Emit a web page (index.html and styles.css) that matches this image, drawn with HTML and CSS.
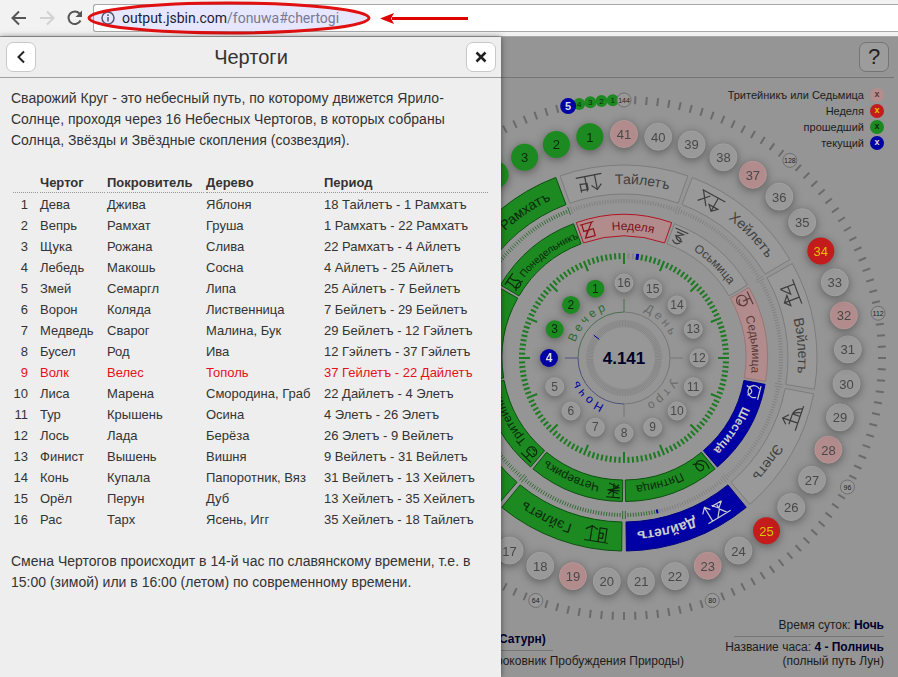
FILE: index.html
```html
<!DOCTYPE html>
<html lang="ru">
<head>
<meta charset="utf-8">
<title>Чертоги</title>
<link rel="stylesheet" href="styles.css">
</head>
<body>
<header class="browser">
  <button class="nav" aria-label="Back"><svg width="16" height="16" viewBox="0 0 16 16"><path d="M15 8H2M8 1.500L1.500 8L8 14.500"/></svg></button>
  <button class="nav nav-off" aria-label="Forward"><svg width="16" height="16" viewBox="0 0 16 16"><path d="M1 8H14M8 1.500L14.500 8L8 14.500"/></svg></button>
  <button class="nav" aria-label="Reload"><svg width="16" height="16" viewBox="0 0 16 16"><path d="M13.500 10.500A6.300 6.300 0 1 1 12.500 3.500"/><path class="solid" d="M15 0.500V7H8.500Z"/></svg></button>
  <div class="address">
    <svg class="info" width="14" height="14" viewBox="0 0 14 14"><circle cx="7" cy="7" r="6"/><path d="M7 6V10.500M7 3.300V4.900"/></svg>
    <span class="url"><b>output.jsbin.com</b>/fonuwa#chertogi</span>
  </div>
  <svg class="marker" width="480" height="36" viewBox="0 0 480 36">
    <ellipse cx="229" cy="18" rx="140" ry="15"/>
    <path class="shaft" d="M392 18.500H468"/>
    <path class="head" d="M380 18.500L394 13L391 18.500L394 24Z"/>
  </svg>
</header>
<div class="app">
  <main class="stage">
    <div class="topbar"><button class="square help">?</button></div>
    <svg class="dial" id="dial" viewBox="-144 -280 411 599"></svg>
    <ul class="legend">
      <li>Тритейникъ или Седьмица <i class="dot pink">x</i></li>
      <li>Неделя <i class="dot red">x</i></li>
      <li>прошедший <i class="dot green">x</i></li>
      <li>текущий <i class="dot blue">x</i></li>
    </ul>
    <footer class="facts">
      <div class="fact-left">
        <p class="fact-name"><b>Сатурн)</b></p>
        <p>роковник Пробуждения Природы)</p>
      </div>
      <div class="fact-right">
        <p class="fact-time">Время суток: <b>Ночь</b></p>
        <p>Название часа: <b>4 - Полничь</b></p>
        <p>(полный путь Лун)</p>
      </div>
    </footer>
  </main>
  <section class="panel">
    <header class="panel-head">
      <button class="square" aria-label="Назад"><svg width="14" height="14" viewBox="0 0 14 14"><path d="M10 1.500L4.500 7L10 12.500"/></svg></button>
      <h1>Чертоги</h1>
      <button class="square" aria-label="Закрыть"><svg class="cross" width="14" height="14" viewBox="0 0 14 14"><path d="M2.500 2.500L11.500 11.500M11.500 2.500L2.500 11.500"/></svg></button>
    </header>
    <div class="panel-body">
      <p>Сварожий Круг - это небесный путь, по которому движется Ярило-Солнце, проходя через 16 Небесных Чертогов, в которых собраны Солнца, Звёзды и Звёздные скопления (созвездия).</p>
      <table>
        <colgroup><col class="c-num"><col class="c-name"><col class="c-patron"><col class="c-tree"><col></colgroup>
        <thead><tr><th></th><th>Чертог</th><th>Покровитель</th><th>Дерево</th><th>Период</th></tr></thead>
        <tbody>
          <tr><td>1</td><td>Дева</td><td>Джива</td><td>Яблоня</td><td>18 Тайлетъ - 1 Рамхатъ</td></tr>
          <tr><td>2</td><td>Вепрь</td><td>Рамхат</td><td>Груша</td><td>1 Рамхатъ - 22 Рамхатъ</td></tr>
          <tr><td>3</td><td>Щука</td><td>Рожана</td><td>Слива</td><td>22 Рамхатъ - 4 Айлетъ</td></tr>
          <tr><td>4</td><td>Лебедь</td><td>Макошь</td><td>Сосна</td><td>4 Айлетъ - 25 Айлетъ</td></tr>
          <tr><td>5</td><td>Змей</td><td>Семаргл</td><td>Липа</td><td>25 Айлетъ - 7 Бейлетъ</td></tr>
          <tr><td>6</td><td>Ворон</td><td>Коляда</td><td>Лиственница</td><td>7 Бейлетъ - 29 Бейлетъ</td></tr>
          <tr><td>7</td><td>Медведь</td><td>Сварог</td><td>Малина, Бук</td><td>29 Бейлетъ - 12 Гэйлетъ</td></tr>
          <tr><td>8</td><td>Бусел</td><td>Род</td><td>Ива</td><td>12 Гэйлетъ - 37 Гэйлетъ</td></tr>
          <tr class="current"><td>9</td><td>Волк</td><td>Велес</td><td>Тополь</td><td>37 Гейлетъ - 22 Дайлетъ</td></tr>
          <tr><td>10</td><td>Лиса</td><td>Марена</td><td>Смородина, Граб</td><td>22 Дайлетъ - 4 Элетъ</td></tr>
          <tr><td>11</td><td>Тур</td><td>Крышень</td><td>Осина</td><td>4 Элетъ - 26 Элетъ</td></tr>
          <tr><td>12</td><td>Лось</td><td>Лада</td><td>Берёза</td><td>26 Элетъ - 9 Вейлетъ</td></tr>
          <tr><td>13</td><td>Финист</td><td>Вышень</td><td>Вишня</td><td>9 Вейлетъ - 31 Вейлетъ</td></tr>
          <tr><td>14</td><td>Конь</td><td>Купала</td><td>Папоротник, Вяз</td><td>31 Вейлетъ - 13 Хейлетъ</td></tr>
          <tr><td>15</td><td>Орёл</td><td>Перун</td><td>Дуб</td><td>13 Хейлетъ - 35 Хейлетъ</td></tr>
          <tr><td>16</td><td>Рас</td><td>Тарх</td><td>Ясень, Игг</td><td>35 Хейлетъ - 18 Тайлетъ</td></tr>
        </tbody>
      </table>
      <p>Смена Чертогов происходит в 14-й час по славянскому времени, т.е. в 15:00 (зимой) или в 16:00 (летом) по современному времени.</p>
    </div>
  </section>
</div>
<script src="dial.js"></script>
</body>
</html>
```
FILE: styles.css
```css
* { box-sizing: border-box; }
body {
  margin: 0;
  min-height: 100vh;
  display: flex;
  flex-direction: column;
  font-family: "Liberation Sans", Arial, sans-serif;
  color: #333;
  background: #eee;
}
p, h1, ul { margin: 0; padding: 0; }
button { padding: 0; font: inherit; color: inherit; }

/* Browser bar */
.browser {
  position: relative;
  display: flex;
  align-items: center;
  height: 37px;
  padding-left: 11px;
  gap: 12px;
  background: #f2f2f2;
  border-bottom: 1px solid #a6a6a6;
}
.nav { width: 16px; height: 16px; border: 0; background: none; }
.nav svg, .info { display: block; fill: none; stroke: #555; stroke-width: 2; }
.nav .solid { fill: #555; stroke: none; }
.nav-off svg { stroke: #d2d2d2; }
.address {
  flex: 1;
  display: flex;
  align-items: center;
  gap: 7px;
  height: 28px;
  margin-left: -2px;
  padding-left: 7px;
  background: #fff;
  border: 1px solid #a8a8a8;
  border-right: 0;
  border-radius: 3px 0 0 3px;
}
.info { stroke: #555; stroke-width: 1.5; }
.url { font: 14px/20px Roboto, "Noto Sans", sans-serif; color: #808080; }
.url b { font-weight: 400; color: #111; }
.marker { position: absolute; left: 0; top: 0; }
.marker ellipse { fill: rgba(90, 90, 255, .15); stroke: #e01010; stroke-width: 3; }
.marker .shaft { stroke: #e00000; stroke-width: 3; }
.marker .head { fill: #e00000; }

/* Layout */
.app { position: relative; flex: 1; display: flex; }
.stage {
  flex: 1;
  display: grid;
  grid-template-columns: 480px 1fr;
  grid-template-rows: 41px 1fr;
  background: #959595;
}
.topbar {
  grid-column: 1 / 3;
  grid-row: 1;
  display: flex;
  justify-content: flex-end;
  align-items: center;
  margin-right: 4px;
  padding-right: 5px;
  border-bottom: 1px solid #747474;
}
.square {
  display: flex;
  align-items: center;
  justify-content: center;
  width: 30px;
  height: 30px;
  background: #fff;
  border: 1px solid #c8c8c8;
  border-radius: 7px;
}
.square svg { fill: none; stroke: #222; stroke-width: 2; }
.square .cross { stroke-width: 2.5; }
.help { background: #9c9c9c; border-color: #747474; color: #222; font-size: 22px; }

.dial { grid-column: 2; grid-row: 2; width: 411px; height: 599px; }
.legend {
  grid-column: 2;
  grid-row: 2;
  justify-self: end;
  align-self: start;
  padding: 9px 14px 0 0;
  list-style: none;
  font-size: 11px;
  line-height: 16px;
  color: #1c1c1c;
}
.legend li { display: flex; justify-content: flex-end; align-items: center; gap: 6px; }
.dot {
  width: 14px;
  height: 14px;
  border-radius: 50%;
  font: bold 9px/13px "Liberation Sans", Arial, sans-serif;
  text-align: center;
}
.dot.pink { background: #b48e8e; color: #5a3838; }
.dot.red { background: #c41c1c; color: #e0c400; }
.dot.green { background: #1c8a20; color: #0a300c; }
.dot.blue { background: #0000a4; color: #ddd; }

.facts {
  grid-column: 1 / 3;
  grid-row: 2;
  align-self: end;
  display: flex;
  justify-content: space-between;
  align-items: flex-end;
  padding: 0 14px 9px 496px;
  font-size: 12px;
  line-height: 14px;
  color: #1c1c1c;
}
.facts b { color: #000030; }
.fact-name { width: 57px; padding: 0 0 4px 3px; margin-bottom: 3px; border-bottom: 1px solid #757575; }
.fact-right { text-align: right; }
.fact-time { width: 150px; margin: 0 0 3px auto; padding-bottom: 4px; border-bottom: 1px solid #757575; }

/* Side panel */
.panel {
  position: absolute;
  left: 0;
  top: 0;
  bottom: 0;
  width: 56%;
  max-width: 501px;
  background: #eee;
  box-shadow: 0 0 6px rgba(0, 0, 0, .5);
}
.panel-head {
  display: flex;
  align-items: center;
  justify-content: space-between;
  height: 41px;
  padding: 0 5px 0 6px;
  border-bottom: 1px solid #a0a0a0;
}
h1 { font-size: 20px; font-weight: 400; }
.panel-body { padding: 10px 11px; font-size: 14px; line-height: 21px; }
table {
  width: 100%;
  margin: 20px 0;
  table-layout: fixed;
  border-collapse: separate;
  border-spacing: 2px;
  font-size: 13px;
  line-height: 19px;
  white-space: nowrap;
}
th, td { padding: 0; text-align: left; }
th { border-bottom: 1px dotted #999; }
td:first-child { text-align: right; padding-right: 10px; }
.c-num { width: 25px; }
.c-name { width: 65px; }
.c-patron { width: 97px; }
.c-tree { width: 116px; }
.current { color: #e61018; }

/* Dial */
.dial text { font-family: "Liberation Sans", Arial, sans-serif; text-anchor: middle; }
.dial .tick { stroke: #6a6a6a; stroke-width: 2; }
.ball { filter: drop-shadow(0 2px 5px rgba(0, 0, 0, .4)); }
.ball circle { fill: #999; stroke: #a0a0a0; }
.ball text { fill: #484848; }
.ball.pink circle { fill: #b28c8c; stroke: #b69696; }
.ball.green circle { fill: #1c8a20; stroke: none; }
.ball.green text { fill: #0a280c; }
.ball.red circle { fill: #c41c1c; stroke: none; }
.ball.red text { fill: #e0c400; }
.ball.blue circle { fill: #0000a4; stroke: none; }
.ball.blue text { fill: #ddd; font-weight: 700; }
.ball.mark circle { stroke: #6e6e6e; }
.ball.mark text { fill: #222; }
.ball.mark, .ball.flat { filter: none; }
.s14 { font-size: 14px; }
.s13 { font-size: 13px; }
.s12 { font-size: 12px; }
.s11 { font-size: 11px; }
.s10 { font-size: 10px; }
.s8 { font-size: 8px; }
.s7 { font-size: 7px; }
.seg .sector { fill: #999; stroke: #7c7c7c; }
.seg text { fill: #404040; }
.seg .rune { fill: none; stroke: #3c3c3c; stroke-width: 1.2; }
.seg .arc { fill: none; stroke: none; }
.seg.green .sector { fill: #1c8a20; stroke: #0c5010; }
.seg.green text { fill: #0a280c; }
.seg.green .rune { stroke: #0a280c; }
.seg.pink .sector { fill: #b28c8c; stroke: #987676; }
.seg.pink text { fill: #5a3838; }
.seg.pink .rune { stroke: #5a3838; }
.seg.week .sector { fill: #b28c8c; stroke: #b01424; }
.seg.week text { fill: #7c1018; }
.seg.week .rune { stroke: #901018; }
.seg.blue .sector { fill: #0000a4; stroke: #000080; }
.seg.blue text { fill: #ccc; font-weight: 700; }
.seg.blue .rune { stroke: #ccc; }
.fine { stroke: #818181; }
.fine.on { stroke: #2e6a30; }
.fine.now { stroke: #0000a4; stroke-width: 2; }
.minute { stroke: #1c7a20; stroke-width: 2; }
.minute.off { stroke: #858585; }
.minute.now { stroke: #0000a4; stroke-width: 3; }
.inner { stroke: #868686; }
.inner.now { stroke: #0000a4; stroke-width: 1; }
.quad { fill: none; stroke: #777; }
.quad.evening { stroke: #4a7050; }
.quad.night { stroke: #50507c; }
.part { font-size: 12px; letter-spacing: 3px; fill: #686868; }
.part.evening { fill: #2a6a30; }
.part.night { fill: #0000a4; }
.hub { fill: #979797; }
.dial .clock { font-size: 17px; font-weight: 700; fill: #000028; }
```
FILE: dial.js
```js
const NS = 'http://www.w3.org/2000/svg';
const dial = document.getElementById('dial');
const LEFT = -136;

function add(parent, name, attrs, text) {
  const el = document.createElementNS(NS, name);
  for (const key in attrs) el.setAttribute(key, attrs[key]);
  if (text !== undefined) el.textContent = text;
  parent.appendChild(el);
  return el;
}
function at(r, deg) {
  const a = deg * Math.PI / 180;
  return [r * Math.sin(a), -r * Math.cos(a)];
}
function tick(cls, r1, r2, deg) {
  const [x1, y1] = at(r1, deg), [x2, y2] = at(r2, deg);
  if (x1 < LEFT) return;
  add(dial, 'line', { class: cls, x1, y1, x2, y2 });
}
function ball(cls, r, deg, size, label, font) {
  const [x, y] = at(r, deg);
  if (x < LEFT) return;
  const g = add(dial, 'g', { class: 'ball ' + cls, transform: `translate(${x} ${y})` });
  add(g, 'circle', { r: size });
  add(g, 'text', { class: 's' + font, y: Math.round(font * 0.36) }, label);
}
function arc(r, a, b) {
  const [x1, y1] = at(r, a), [x2, y2] = at(r, b);
  return `M${x1} ${y1}A${r} ${r} 0 0 1 ${x2} ${y2}`;
}
let ids = 0;
function curved(parent, cls, r, mid, label) {
  const id = 'arc' + ids++;
  add(parent, 'path', { id, class: 'arc', fill: 'none', d: arc(r, mid - 40, mid + 40) });
  const t = add(parent, 'text', { class: cls });
  add(t, 'textPath', { href: '#' + id, startOffset: '50%' }, label);
}
function segment(cls, r1, r2, mid, gap, base, font, label, shift, rune, runeAt) {
  const a = mid - 20 + gap, b = mid + 20 - gap;
  const g = add(dial, 'g', { class: 'seg ' + cls });
  const [x3, y3] = at(r1, b), [x4, y4] = at(r1, a);
  add(g, 'path', { class: 'sector', d: `${arc(r2, a, b)}L${x3} ${y3}A${r1} ${r1} 0 0 0 ${x4} ${y4}Z` });
  if (label) curved(g, 's' + font, base, mid + shift, label);
  if (rune) {
    const [x, y] = at((r1 + r2) / 2, mid + runeAt);
    if (x > LEFT) add(g, 'path', { class: 'rune', d: rune, transform: `translate(${x} ${y}) rotate(${mid + runeAt})` });
  }
}

/* Outer ring: 144 parts */
for (let i = 5; i < 144; i++) if (i % 16) tick('tick', 254, 262, -i * 2.5);
for (let n = 1; n < 5; n++) ball('green flat', 258, -n * 2.5, 6, n, 8);
for (const n of [64, 80, 96, 112, 128, 144]) ball('mark', 258, -n * 2.5, 7, n, 7);
ball('blue flat', 258, -12.5, 8, 5, 11);

/* Days of the month */
const pinkDays = [5, 10, 14, 19, 23, 28, 32, 37, 41];
for (let n = 1; n <= 41; n++) {
  let cls = n < 7 ? 'green' : '';
  if (n > 6 && pinkDays.includes(n)) cls = 'pink';
  if (n === 25 || n === 34) cls = 'red';
  ball(cls, 224, -n * 360 / 41, 13.5, n, 13);
}

/* Months */
const months = [
  ['Тайлетъ', '', 'M-13-7H13M-10-1V8M-10 0H-3V6H-10M-4-7V8M6-7V8M1 3L6 8L11 3'],
  ['Хейлетъ', '', 'M-13-7H13M-12-7L-2 6M-3-5L-12 5M5-7V8M0 3H10L5 8Z'],
  ['Вэйлетъ', '', 'M-13-7H13M-8-7V8M6-7V9M-8 8L0 0H-8M0 4H11L6 9Z'],
  ['Элетъ', '', 'M-13-7H13M-10-7Q-8 0-2 1M-6-7Q-5-2-2 1M-2-7V1M5-7V9M0 4L5 9L10 4M-2 1H9'],
  ['Дайлетъ', 'blue', 'M-13-7H13M-9-7L-4 0L2-7M-4 0V5M-10 6L-4 1L1 7M-10 6H1M8-7V9M4 4L8 9L13 4'],
  ['Гэйлетъ', 'green', 'M-13-7H11M-10-7V7H-3V-7M-7-3H-3V2H-7ZM5-7V8M-1 5L5 8L11 4'],
  ['', 'green', ''],
  ['', 'green', ''],
  ['Рамхатъ', 'green', '']
];
months.forEach(([label, cls, rune], i) =>
  segment(cls, 164, 193, i * 40, 0.7, 174, 14, label, 6, rune, -11));

/* Days inside each month */
for (let i = 0; i < 369; i++) {
  const deg = i * 360 / 369;
  const edge = i % 41 === 20 || i % 41 === 21;
  const cls = i === 172 ? 'fine now' : deg > 168 && deg < 340 ? 'fine on' : 'fine';
  tick(cls, edge ? 153 : 155, edge ? 161 : 159, deg);
}

/* Week */
const week = [
  ['Неделя', 'week', 12, 'M-7-7H7M-5-7V0H5V7H-5L-1 0M5-7L-5 7'],
  ['Осьмица', '', 12, 'M-7-7H7M-4-4H3L-3 0Q5 0 3 5Q0 9-5 5M-4-1Q-1 5 5 3'],
  ['Седьмица', 'pink', 12, 'M-7-7H7M0-7V1M0-3A5 5 0 1 0 3 4M0-3A4 4 0 1 1-3 3'],
  ['Шестица', 'blue', 12, 'M-7-7H7M-4-6A6 6 0 1 0 5-5M-4 7Q0-4 5 4M-6 0L-3 5'],
  ['Пятница', 'green', 12, 'M-5-7Q-8 4 0 6Q7 4 4-3Q0-6-2-1Q0 4 6 6'],
  ['Четверикъ', 'green', 12, 'M-7-7H7M-5-3L5 0L-5 3L5 7M0-7V7M5-4L-5 6M-6 0H6'],
  ['Тритейникъ', 'green', 12, 'M-7-7H7M-4-2A5 5 0 1 0 4-2ZM-4 1H-2M2 1H4M-2 4H2M0-7V-2'],
  ['', 'green', 12, ''],
  ['Понедельникъ', 'green', 10, 'M-7-7H7M-3-7V0A4 4 0 1 0 4 1Q0-3 2-7M-6 6Q0 0 6 6']
];
week.forEach(([label, cls, font, rune], i) =>
  segment(cls, 122, 143.5, i * 40, 0.6, 128, font, label, 4, rune, -15.5));

/* Parts of the hour */
for (let i = 0; i < 144; i++) {
  const cls = i === 3 ? 'minute now' : i === 1 || i === 2 ? 'minute off' : 'minute';
  tick(cls, i % 9 ? 99 : 94, 105, i * 2.5);
}

/* Hours */
for (let n = 1; n <= 16; n++) {
  const cls = n < 4 ? 'green' : n === 4 ? 'blue' : '';
  ball(cls, 75, -n * 22.5, 9, n, 12);
}

/* Parts of the day */
[['День', ''], ['Утро', ''], ['Ночь', 'night'], ['Вечер', 'evening']].forEach(([label, cls], i) => {
  const mid = 45 + i * 90;
  add(dial, 'path', { class: 'quad ' + cls, d: arc(46, mid - 45, mid + 45) });
  tick('quad ' + cls, 46, 59, mid + 45);
  curved(dial, 'part ' + cls, 51, mid, label);
});

/* Centre */
for (let i = 0; i < 144; i++) tick('inner', 31, 38, i * 2.5);
tick('inner now', 31, 38, -53);
add(dial, 'circle', { class: 'hub', r: 30 });
add(dial, 'text', { class: 'clock', y: 6 }, '4.141');
```
